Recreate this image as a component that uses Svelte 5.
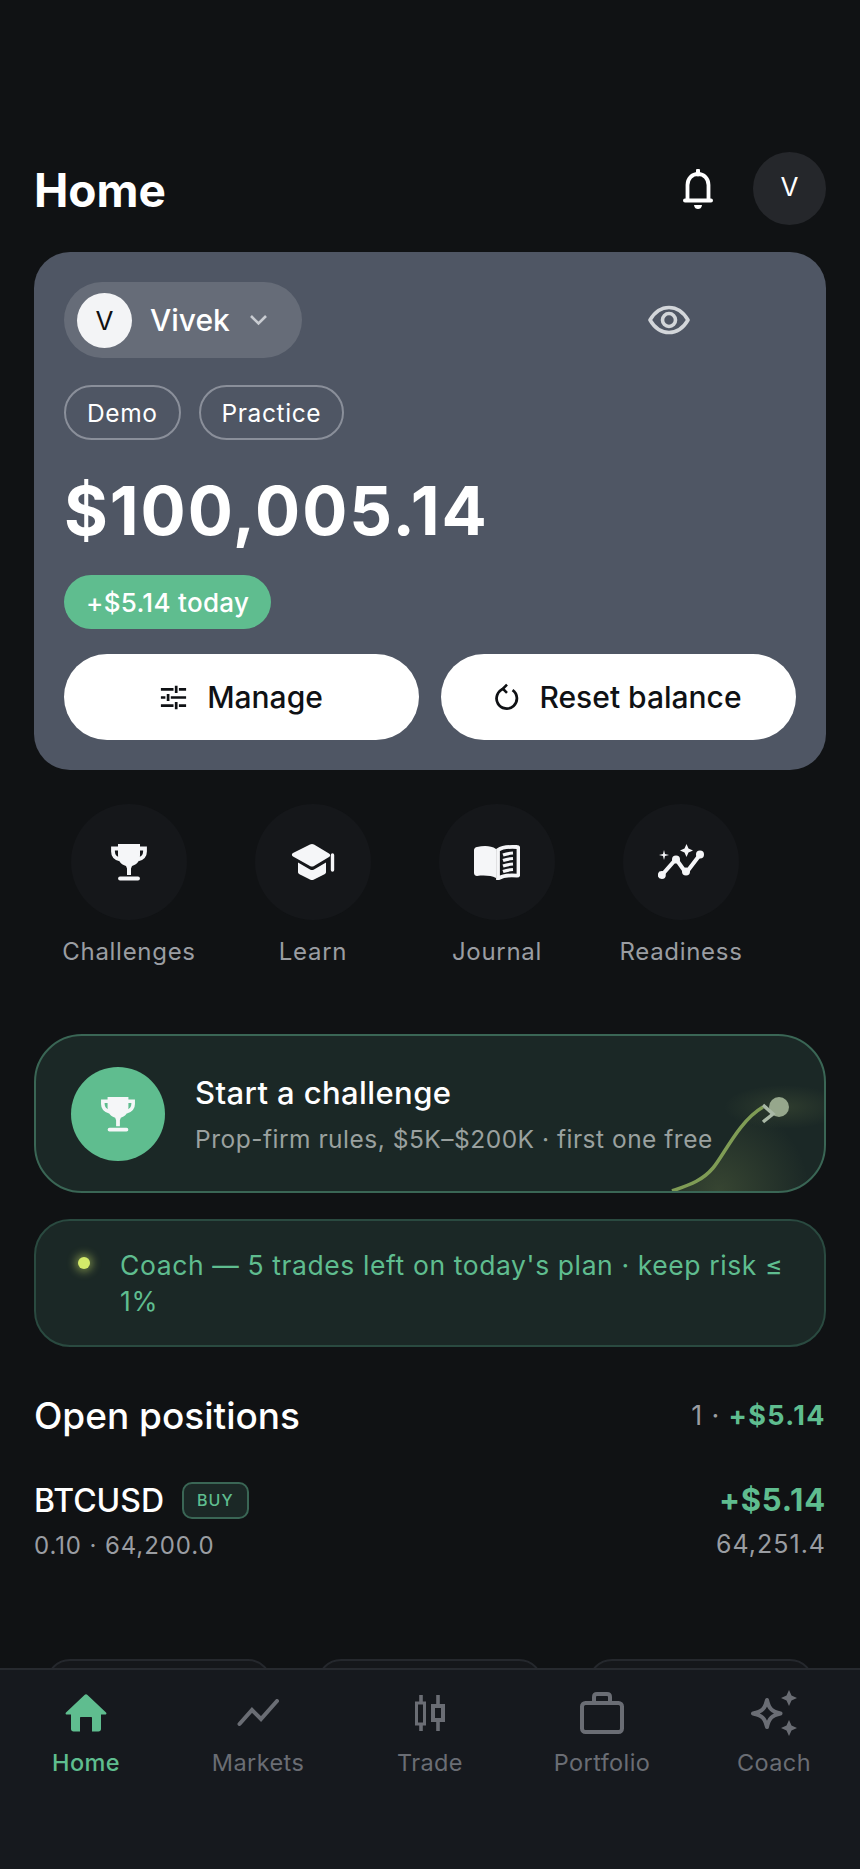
<script>
    const actions = [
        { label: 'Challenges', icon: 'trophy' },
        { label: 'Learn', icon: 'cap' },
        { label: 'Journal', icon: 'book' },
        { label: 'Readiness', icon: 'spark' }
    ];
    const tabs = [
        { label: 'Home', icon: 'home', active: true },
        { label: 'Markets', icon: 'markets' },
        { label: 'Trade', icon: 'trade' },
        { label: 'Portfolio', icon: 'bag' },
        { label: 'Coach', icon: 'coach' }
    ];
</script>

{#snippet trophy(size)}
    <svg width={size} height={size} viewBox="0 0 38 38" fill="none">
        <path d="M8 1h22v11c0 6-3 9.500-8 11l-1 2.500V32h-4v-6.500l-1-2.500C11 21.500 8 18 8 12z" fill="#f5f6f8"/>
        <path d="M9 5.500H3v3c0 4.500 3 7 7 8M29 5.500h6v3c0 4.500-3 7-7 8" stroke="#f5f6f8" stroke-width="3.800"/>
        <path d="M10 35.500h18" stroke="#f5f6f8" stroke-width="3.800" stroke-linecap="round"/>
    </svg>
{/snippet}

<div class="page">
    <header class="top">
        <h1>Home</h1>
        <div class="top-right">
            <svg class="bell" width="32" height="41" viewBox="0 0 32 41" fill="none">
                <path d="M16 1.500v4" stroke="#fff" stroke-width="4" stroke-linecap="round"/>
                <path d="M5.500 30V16c0-6.500 4.500-11 10.500-11s10.500 4.500 10.500 11v14" stroke="#fff" stroke-width="3.800"/>
                <path d="M3 31.500h26" stroke="#fff" stroke-width="4" stroke-linecap="round"/>
                <path d="M12 36h8c-.5 3-2 4-4 4s-3.500-1-4-4z" fill="#fff"/>
            </svg>
            <div class="avatar">V</div>
        </div>
    </header>

    <section class="balance">
        <div class="balance-top">
            <div class="account">
                <span class="account-dot">V</span>
                <span class="account-name">Vivek</span>
                <svg width="19" height="12" viewBox="0 0 19 12" fill="none">
                    <path d="M2 2l7.500 7.500L17 2" stroke="#c9ccd2" stroke-width="2.600"/>
                </svg>
            </div>
            <svg class="eye" width="42" height="30" viewBox="0 0 42 30" fill="none">
                <path d="M2 15C7 6.500 13 2.500 21 2.500S35 6.500 40 15c-5 8.500-11 12.500-19 12.500S7 23.500 2 15z" stroke="#d3d6da" stroke-width="3.600" stroke-linejoin="round"/>
                <circle cx="21" cy="15" r="6.500" stroke="#d3d6da" stroke-width="3.600"/>
            </svg>
        </div>
        <div class="chips">
            <span class="chip">Demo</span>
            <span class="chip">Practice</span>
        </div>
        <div class="amount">$100,005.14</div>
        <div class="today">+$5.14 today</div>
        <div class="buttons">
            <button>
                <svg width="27" height="27" viewBox="0 0 30 30" fill="none" stroke="#0f1114" stroke-width="3">
                    <path d="M1 6h14M21 6h8M1 15h5M12 15h17M1 24h14M21 24h8"/>
                    <path d="M18 2v8M9 11v8M18 20v8"/>
                </svg>
                Manage
            </button>
            <button>
                <svg width="24" height="29" viewBox="0 0 26 30" fill="none" stroke="#0f1114" stroke-width="3">
                    <path d="M9.500 5.500A11 11 0 1 0 19 7"/>
                    <path d="M13 1L8.500 5.500 13 10" stroke-width="2.800"/>
                </svg>
                Reset balance
            </button>
        </div>
    </section>

    <nav class="actions">
        {#each actions as a}
            <div class="action">
                <div class="action-circle">
                    {#if a.icon === 'trophy'}
                        {@render trophy(38)}
                    {:else if a.icon === 'cap'}
                        <svg width="44" height="38" viewBox="0 0 44 38" fill="none">
                            <path d="M19 1.500a4 4 0 0 1 4 0L38 10.500c1.500 1 1.500 2.500 0 3.500L23 23a4 4 0 0 1-4 0L2 13.500c-1.500-1-1.500-2.500 0-3.500z" fill="#f5f6f8"/>
                            <path d="M7 19.500l12 7a4 4 0 0 0 4 0l12-7v9.500c0 1-.5 1.500-1.500 2.200L23 36.500a4 4 0 0 1-4 0L8.500 31.200C7.500 30.500 7 30 7 29z" fill="#f5f6f8"/>
                            <path d="M41.500 12v15" stroke="#f5f6f8" stroke-width="3.400" stroke-linecap="round"/>
                        </svg>
                    {:else if a.icon === 'book'}
                        <svg width="46" height="36" viewBox="0 0 46 36" fill="none">
                            <path d="M3 3c7-1.500 14-1.500 19 2v29c-5-2.500-12-3-19-2-1.500 0-3-1-3-3V6c0-1.500 1.500-3 3-3z" fill="#f5f6f8"/>
                            <path d="M24 6c5-3.500 11-3.500 19-3 1 0 1.500 1 1.500 2v25c0 1-.5 1.700-1.500 1.700-7-.7-14 0-19 2.800z" stroke="#f5f6f8" stroke-width="3.800"/>
                            <path d="M29 11c3.500-1.300 7-1.800 10-2M29 16.500c3.500-1.300 7-1.800 10-2M29 22c3.500-1.300 7-1.800 10-2M29 27.500c3.500-1.300 7-1.800 10-2" stroke="#f5f6f8" stroke-width="3.200"/>
                        </svg>
                    {:else}
                        <svg width="46" height="36" viewBox="0 0 46 36" fill="none">
                            <path d="M3.500 31.500L18 15l10 14L42.500 10" stroke="#f5f6f8" stroke-width="4" stroke-linejoin="round"/>
                            <circle cx="3.800" cy="31" r="4" fill="#f5f6f8"/>
                            <circle cx="18" cy="15.500" r="4" fill="#f5f6f8"/>
                            <circle cx="28" cy="27.500" r="4" fill="#f5f6f8"/>
                            <circle cx="42" cy="10.500" r="4" fill="#f5f6f8"/>
                            <path d="M28.500 0l2 4.500 4.500 2-4.500 2-2 4.500-2-4.500-4.500-2 4.500-2z" fill="#f5f6f8"/>
                            <path d="M6 6l1 4 4 1-4 1-1 4-1-4-4-1 4-1z" fill="#f5f6f8"/>
                        </svg>
                    {/if}
                </div>
                <span class="action-label">{a.label}</span>
            </div>
        {/each}
    </nav>

    <section class="challenge">
        <svg class="challenge-curve" width="200" height="155" viewBox="0 0 200 155" fill="none">
            <defs>
                <radialGradient id="glow" cx="0.5" cy="0.5" r="0.5">
                    <stop offset="0" stop-color="#c8dc6e" stop-opacity="0.11"/>
                    <stop offset="1" stop-color="#c8dc6e" stop-opacity="0"/>
                </radialGradient>
                <radialGradient id="under" gradientUnits="userSpaceOnUse" cx="95" cy="155" r="90">
                    <stop offset="0" stop-color="#c8dc6e" stop-opacity="0.16"/>
                    <stop offset="1" stop-color="#c8dc6e" stop-opacity="0"/>
                </radialGradient>
            </defs>
            <ellipse cx="160" cy="71" rx="60" ry="22" fill="url(#glow)"/>
            <path d="M48 155C65 149 78 145 89 132 100 119 115 85 139 71L200 71V155z" fill="url(#under)"/>
            <path d="M48 155C65 149 78 145 89 132 100 119 115 85 139 71" stroke="#7f9c55" stroke-width="3.500"/>
            <circle cx="155" cy="71" r="10" fill="#96a78c"/>
            <path d="M139 69l10 9-10 8" stroke="#a9b8a6" stroke-width="3.500"/>
        </svg>
        <div class="challenge-icon">{@render trophy(36)}</div>
        <div class="challenge-text">
            <div class="challenge-title">Start a challenge</div>
            <div class="challenge-sub">Prop-firm rules, $5K–$200K · first one free</div>
        </div>
    </section>

    <section class="coach">
        <span class="coach-dot"></span>
        <p>Coach — 5 trades left on today's plan · keep risk ≤ 1%</p>
    </section>

    <div class="positions-head">
        <h2>Open positions</h2>
        <div class="positions-sum">1 · <b>+$5.14</b></div>
    </div>

    <div class="position">
        <div>
            <div class="symbol">BTCUSD <span class="side">BUY</span></div>
            <div class="muted">0.10 · 64,200.0</div>
        </div>
        <div class="position-right">
            <div class="pnl">+$5.14</div>
            <div class="muted">64,251.4</div>
        </div>
    </div>

    <div class="ghost-row">
        <div></div>
        <div></div>
        <div></div>
    </div>

    <footer class="tabbar">
        {#each tabs as t}
            <div class="tab" class:active={t.active}>
                <div class="tab-icon">
                    {#if t.icon === 'home'}
                        <svg width="42" height="38" viewBox="0 0 42 38" fill="none">
                            <path d="M19.500 1a2 2 0 0 1 3 0L41 18.500c.8.800.4 2-.8 2H36V35c0 1.500-1 2.500-2.500 2.500H27V24c0-.6-.4-1-1-1H16c-.6 0-1 .4-1 1v13.500H8.500C7 37.500 6 36.500 6 35V20.500H1.800c-1.200 0-1.600-1.200-.8-2z" fill="#5fbd8f"/>
                        </svg>
                    {:else if t.icon === 'markets'}
                        <svg width="42" height="28" viewBox="0 0 42 28" fill="none">
                            <path d="M2.500 25L15 11l9 9L40 2" stroke="#6a6d74" stroke-width="4" stroke-linecap="round"/>
                        </svg>
                    {:else if t.icon === 'trade'}
                        <svg width="30" height="36" viewBox="0 0 30 36" fill="none" stroke="#6a6d74">
                            <path d="M6 0v8M6 29v7M23 0v11M23 25v11" stroke-width="3.600"/>
                            <rect x="1.500" y="8" width="8" height="21" stroke-width="3"/>
                            <rect x="18" y="11" width="10" height="14" stroke-width="4"/>
                        </svg>
                    {:else if t.icon === 'bag'}
                        <svg width="44" height="42" viewBox="0 0 44 42" fill="none" stroke="#6a6d74" stroke-width="4">
                            <rect x="2" y="11" width="40" height="29" rx="3.500"/>
                            <path d="M14 11V5c0-2 1-3 3-3h10c2 0 3 1 3 3v6"/>
                        </svg>
                    {:else}
                        <svg width="48" height="46" viewBox="0 0 48 46" fill="none">
                            <path d="M17 10c2 9 5 11.500 13.500 13.500C22 25.500 19 28 17 37c-2-9-5-11.500-14-13.500C12 21.500 15 19 17 10z" stroke="#6a6d74" stroke-width="4" stroke-linejoin="round"/>
                            <path d="M39 0l2.500 5.500L47 8l-5.500 2.500L39 16l-2.500-5.500L31 8l5.500-2.500zM39 30l2.500 5.500L47 38l-5.500 2.500L39 46l-2.500-5.500L31 38l5.500-2.500z" fill="#6a6d74"/>
                        </svg>
                    {/if}
                </div>
                <span>{t.label}</span>
            </div>
        {/each}
    </footer>
</div>

<style>
    :global(body) {
        background: #101214;
    }

    .page {
        position: relative;
        box-sizing: border-box;
        width: 860px;
        height: 1869px;
        padding: 152px 34px 0;
        overflow: hidden;
        background: #101214;
        color: #fff;
        font-family: Inter, "Liberation Sans", sans-serif;
    }

    .top {
        display: flex;
        align-items: center;
        justify-content: space-between;
        height: 72px;
    }

    h1 {
        margin: 4px 0 0;
        font-size: 46px;
        font-weight: 700;
    }

    .top-right {
        display: flex;
        align-items: center;
        gap: 39px;
    }

    .bell {
        margin-top: 2px;
    }

    .avatar {
        display: flex;
        align-items: center;
        justify-content: center;
        width: 73px;
        height: 73px;
        padding-bottom: 4px;
        box-sizing: border-box;
        border-radius: 50%;
        background: #25272b;
        font-size: 26px;
    }

    .balance {
        margin-top: 28px;
        padding: 30px;
        height: 518px;
        box-sizing: border-box;
        border-radius: 36px;
        background: #4f5664;
    }

    .balance-top {
        display: flex;
        align-items: center;
    }

    .account {
        display: flex;
        align-items: center;
        width: 238px;
        height: 76px;
        box-sizing: border-box;
        padding-left: 13px;
        border-radius: 38px;
        background: #666c78;
    }

    .account-dot {
        display: flex;
        align-items: center;
        justify-content: center;
        width: 55px;
        height: 55px;
        border-radius: 50%;
        background: #f3f4f6;
        color: #111;
        font-size: 26px;
    }

    .account-name {
        margin: 0 19px 0 18px;
        font-size: 30px;
        font-weight: 500;
    }

    .eye {
        margin-left: 346px;
    }

    .chips {
        display: flex;
        gap: 18px;
        margin-top: 27px;
    }

    .chip {
        display: flex;
        align-items: center;
        height: 55px;
        box-sizing: border-box;
        padding: 0 21px;
        border: 2px solid #8a8f9a;
        border-radius: 28px;
        font-size: 24.5px;
        letter-spacing: 0.6px;
    }

    .amount {
        margin-top: 31px;
        font-size: 67px;
        font-weight: 700;
        line-height: 80px;
        letter-spacing: 1.9px;
    }

    .today {
        display: inline-flex;
        align-items: center;
        height: 54px;
        margin-top: 24px;
        padding: 0 22px;
        border-radius: 27px;
        background: #5fbd8f;
        font-size: 26px;
        font-weight: 500;
        letter-spacing: 0.3px;
    }

    .buttons {
        display: flex;
        gap: 22px;
        margin-top: 25px;
    }

    button {
        display: flex;
        flex: 1;
        align-items: center;
        justify-content: center;
        gap: 20px;
        height: 86px;
        border: none;
        border-radius: 43px;
        background: #fff;
        color: #0f1114;
        font-family: inherit;
        font-size: 30px;
        font-weight: 500;
    }

    .actions {
        display: grid;
        grid-template-columns: repeat(4, 184px);
        margin: 34px 0 0 3px;
    }

    .action {
        display: flex;
        flex-direction: column;
        align-items: center;
    }

    .action-circle {
        display: flex;
        align-items: center;
        justify-content: center;
        width: 116px;
        height: 116px;
        border-radius: 50%;
        background: #15171a;
    }

    .action-label {
        margin-top: 17px;
        color: #9a9da2;
        font-size: 24px;
        letter-spacing: 0.7px;
        white-space: nowrap;
    }

    .challenge {
        position: relative;
        display: flex;
        align-items: center;
        gap: 30px;
        height: 159px;
        margin-top: 68px;
        padding-left: 35px;
        box-sizing: border-box;
        border: 2px solid #3a6655;
        border-radius: 48px;
        background: #1b2826;
        overflow: hidden;
    }

    .challenge-icon {
        position: relative;
        display: flex;
        align-items: center;
        justify-content: center;
        width: 94px;
        height: 94px;
        border-radius: 50%;
        background: #5fbd8f;
    }

    .challenge-text {
        position: relative;
    }

    .challenge-title {
        font-size: 31px;
        font-weight: 500;
        letter-spacing: 0.4px;
    }

    .challenge-sub {
        margin-top: 13px;
        color: #9aa19f;
        font-size: 24.5px;
        letter-spacing: 0.5px;
        white-space: nowrap;
    }

    .challenge-curve {
        position: absolute;
        right: 0;
        top: 0;
    }

    .coach {
        display: flex;
        gap: 30px;
        height: 128px;
        margin-top: 26px;
        padding: 26px 30px 0 42px;
        box-sizing: border-box;
        border: 2px solid #2a4a40;
        border-radius: 36px;
        background: #1b2826;
    }

    .coach-dot {
        flex: none;
        width: 12px;
        height: 12px;
        margin-top: 10px;
        border-radius: 50%;
        background: #d4ea6a;
        box-shadow: 0 0 9px 3px rgba(212, 234, 106, 0.45);
    }

    .coach p {
        margin: 0;
        color: #5fbd8f;
        font-size: 26.5px;
        line-height: 36px;
        letter-spacing: 0.6px;
    }

    .positions-head {
        display: flex;
        align-items: center;
        justify-content: space-between;
        margin-top: 46px;
    }

    h2 {
        margin: 0;
        font-size: 37px;
        font-weight: 500;
    }

    .positions-sum {
        color: #9a9da2;
        font-size: 27px;
        letter-spacing: 0.8px;
    }

    .positions-sum b {
        letter-spacing: 1.4px;
    }

    .positions-sum b, .pnl {
        color: #5fbd8f;
        font-weight: 700;
    }

    .position {
        display: flex;
        justify-content: space-between;
        margin-top: 43px;
    }

    .symbol {
        display: flex;
        align-items: center;
        gap: 18px;
        height: 38px;
        font-size: 32px;
        font-weight: 500;
    }

    .side {
        display: flex;
        align-items: center;
        height: 37px;
        box-sizing: border-box;
        padding: 0 13px;
        border: 2px solid #3a6655;
        border-radius: 10px;
        background: #1b2826;
        color: #5fbd8f;
        font-size: 16px;
        letter-spacing: 1px;
    }

    .muted {
        margin-top: 12px;
        color: #9a9da2;
        font-size: 24px;
        letter-spacing: 0.9px;
    }

    .position-right {
        text-align: right;
    }

    .position-right .muted {
        margin-top: 10px;
        font-size: 25px;
        letter-spacing: 1px;
    }

    .pnl {
        font-size: 31px;
        line-height: 38px;
        letter-spacing: 0.8px;
    }

    .ghost-row {
        display: flex;
        gap: 45px;
        margin: 99px 12px 0;
    }

    .ghost-row div {
        flex: 1;
        height: 60px;
        border: 2px solid #25282d;
        border-radius: 24px;
        background: #15171a;
    }

    .tabbar {
        position: absolute;
        left: 0;
        right: 0;
        bottom: 0;
        display: grid;
        grid-template-columns: repeat(5, 172px);
        height: 201px;
        box-sizing: border-box;
        border-top: 2px solid #272a2f;
        background: #16191e;
    }

    .tab {
        display: flex;
        flex-direction: column;
        align-items: center;
        color: #6a6d74;
        font-size: 23.5px;
        letter-spacing: 0.4px;
    }

    .tab-icon {
        display: flex;
        align-items: center;
        justify-content: center;
        height: 48px;
        margin: 19px 0 11px;
    }

    .tab.active {
        color: #5fbd8f;
        font-weight: 500;
    }
</style>
